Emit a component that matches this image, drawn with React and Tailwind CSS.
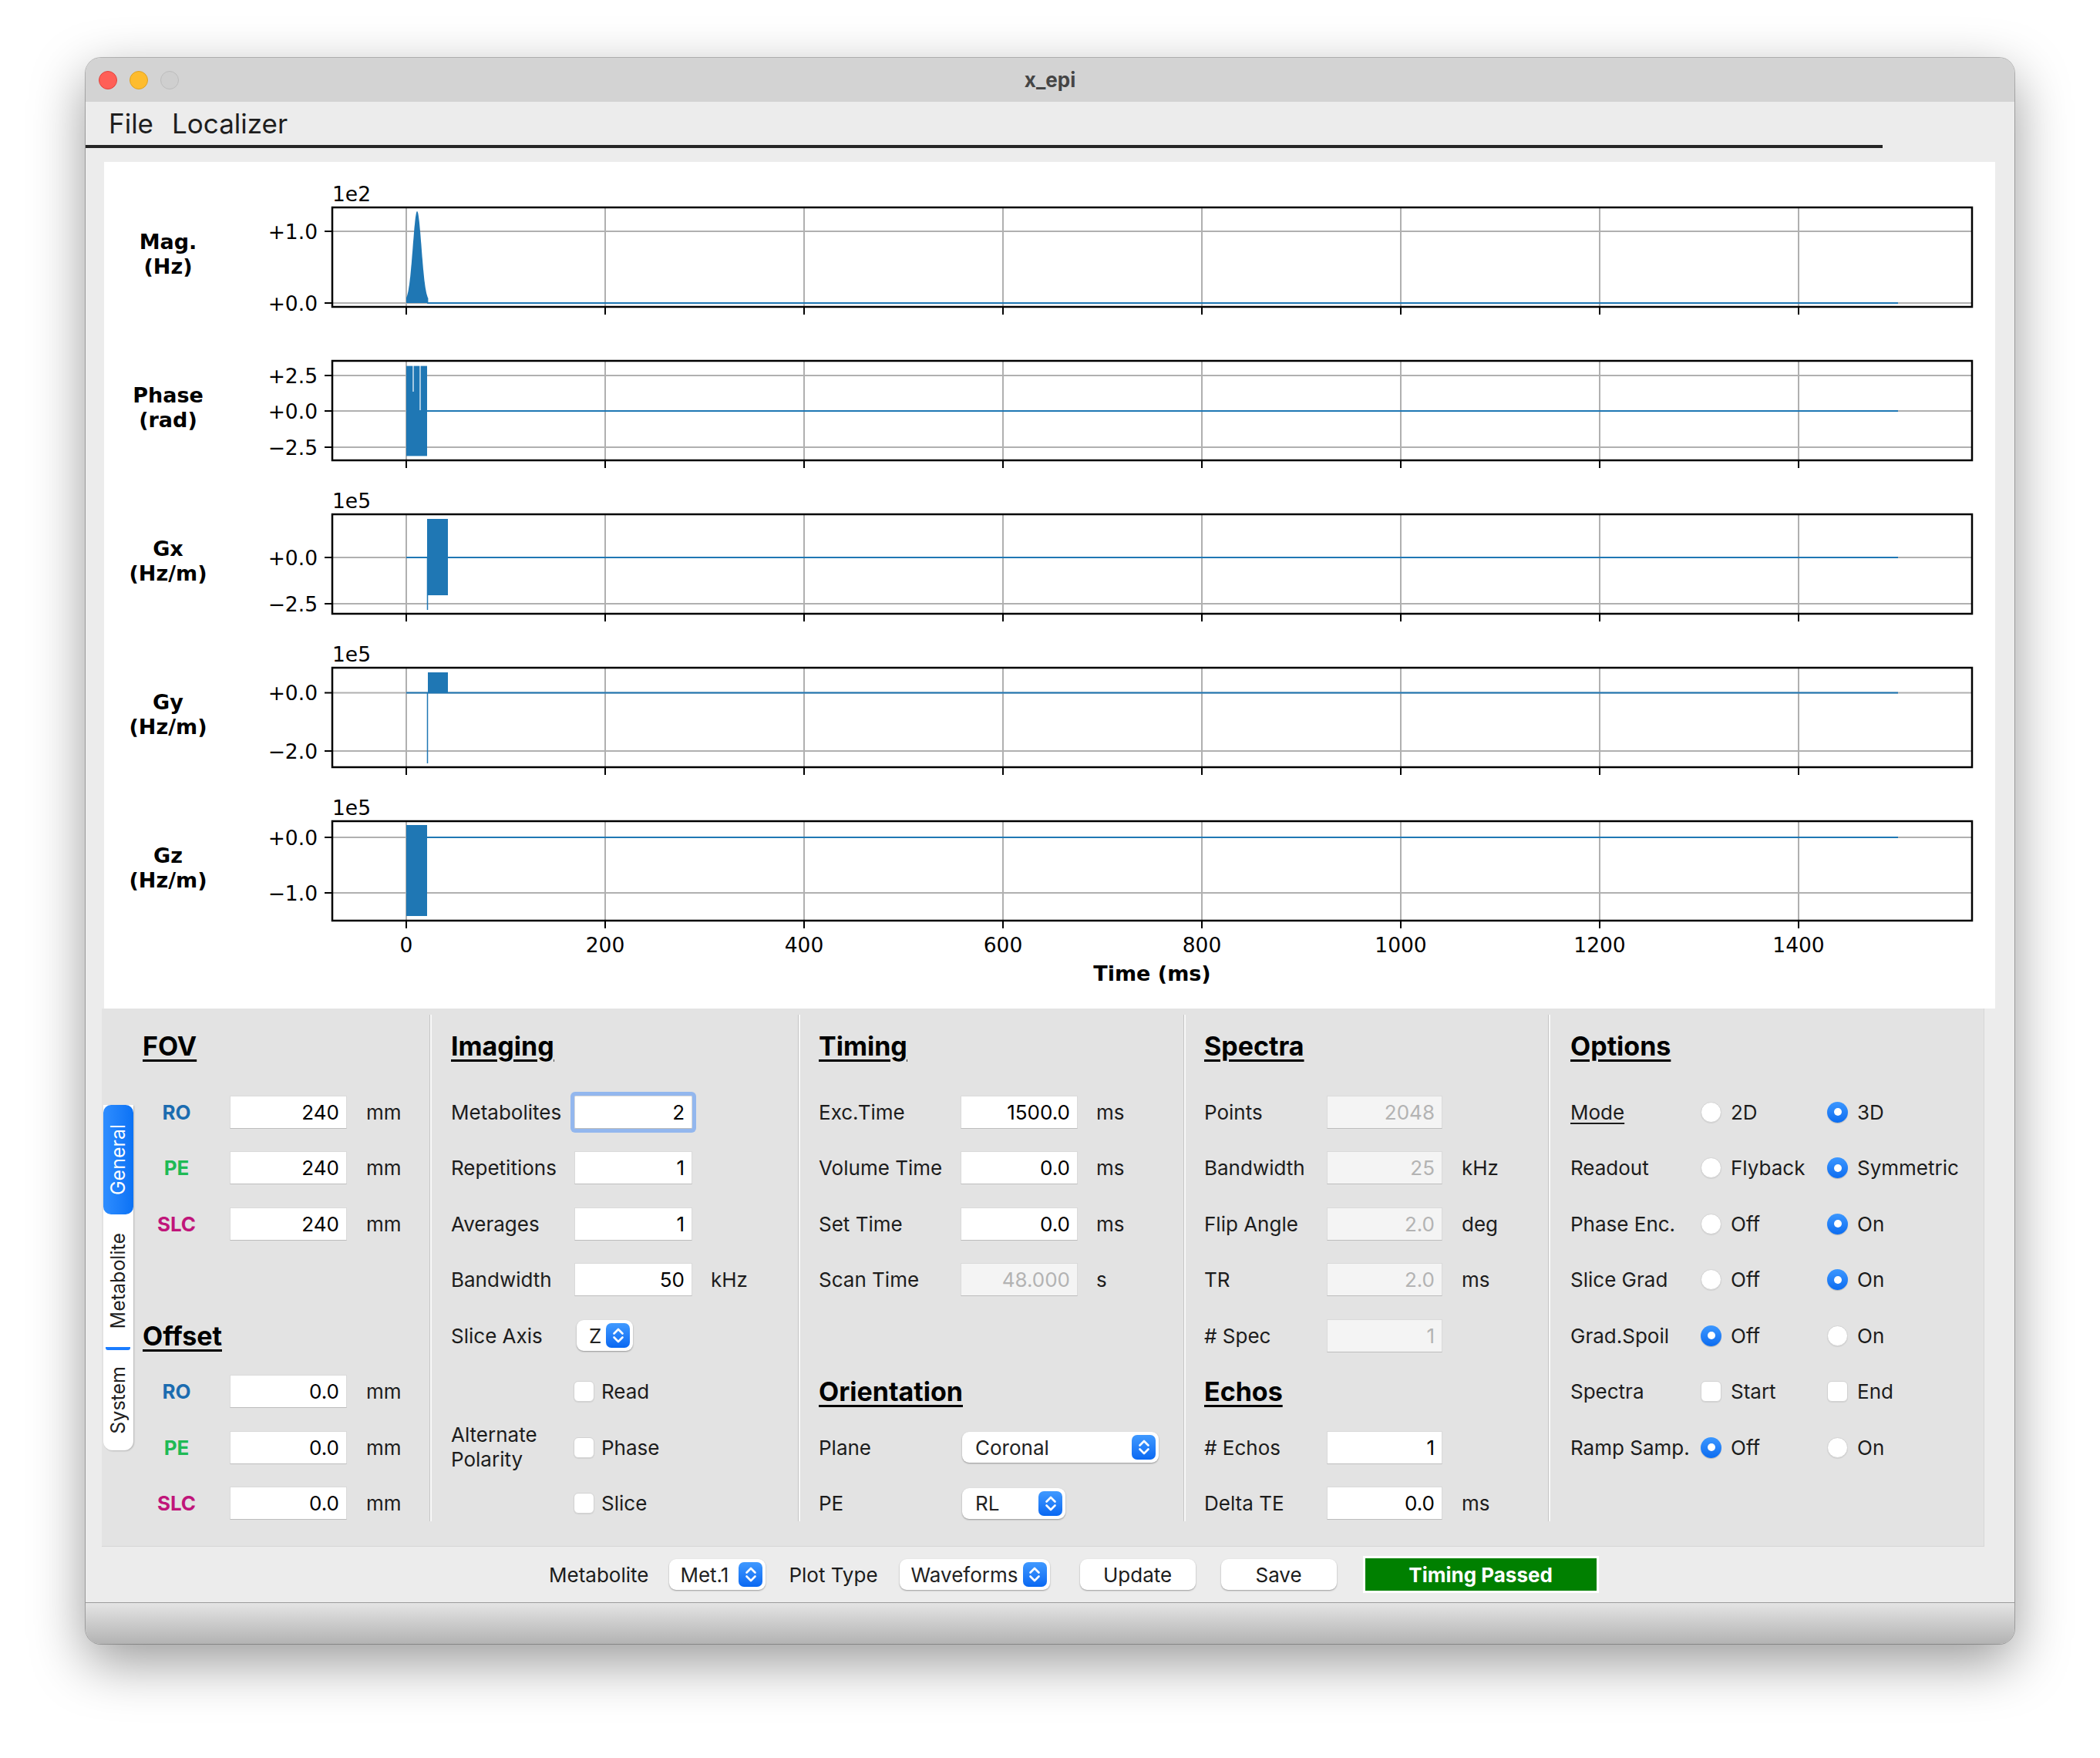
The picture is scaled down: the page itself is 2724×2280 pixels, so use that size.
import React from "react";

// ---- plot geometry (px inside the white figure canvas) ----
const AX_L = 296;
const AX_R = 2423;
const AX_H = 129;
const tx = (t) => 392 + t * 1.29;
const XTICKS = [0, 200, 400, 600, 800, 1000, 1200, 1400];
const END = tx(1500);
const BLUE = "#1f77b4";
const MINUS = "\u2212";

const PLOTS = [
  { key: "mag", top: 59, label: ["Mag.", "(Hz)"], exp: "1e2", ticks: [[90, "+1.0"], [183, "+0.0"]] },
  { key: "phase", top: 258, label: ["Phase", "(rad)"], ticks: [[277, "+2.5"], [323, "+0.0"], [370, MINUS + "2.5"]] },
  { key: "gx", top: 457, label: ["Gx", "(Hz/m)"], exp: "1e5", ticks: [[513, "+0.0"], [573, MINUS + "2.5"]] },
  { key: "gy", top: 656, label: ["Gy", "(Hz/m)"], exp: "1e5", ticks: [[688.5, "+0.0"], [764, MINUS + "2.0"]] },
  { key: "gz", top: 855, label: ["Gz", "(Hz/m)"], exp: "1e5", ticks: [[876, "+0.0"], [948, MINUS + "1.0"]] },
];

// rf magnitude pulse outline (bell shaped)
const magPulse = (() => {
  const pts = [`${tx(0)},183`];
  for (let t = 0; t <= 22; t += 0.25) {
    const v = Math.exp(-((t - 10.9) ** 2) / (2 * 4.3 ** 2));
    pts.push(`${tx(t).toFixed(1)},${(183 - 117 * v - 2).toFixed(1)}`);
  }
  pts.push(`${tx(22)},183`);
  return pts.join(" ");
})();

function Trace({ k }) {
  if (k === "mag")
    return (
      <g>
        <polygon points={magPulse} fill={BLUE} />
        <line x1={tx(21)} y1={183} x2={END} y2={183} stroke={BLUE} strokeWidth="2" />
      </g>
    );
  if (k === "phase")
    return (
      <g>
        <rect x={392} y={264.6} width={27} height={116.8} fill={BLUE} />
        <line x1={401} y1={264} x2={401} y2={298} stroke="white" strokeWidth="1.2" />
        <line x1={410} y1={264} x2={410} y2={322} stroke="white" strokeWidth="1.2" />
        <line x1={419} y1={323} x2={END} y2={323} stroke={BLUE} strokeWidth="2" />
      </g>
    );
  if (k === "gx")
    return (
      <g>
        <line x1={392} y1={513} x2={END} y2={513} stroke={BLUE} strokeWidth="2" />
        <rect x={419} y={463} width={27} height={99} fill={BLUE} />
        <line x1={419.5} y1={513} x2={419.5} y2={581} stroke={BLUE} strokeWidth="1.5" />
      </g>
    );
  if (k === "gy")
    return (
      <g>
        <line x1={392} y1={688.5} x2={END} y2={688.5} stroke={BLUE} strokeWidth="2" />
        <rect x={420} y={662} width={26} height={26.5} fill={BLUE} />
        <line x1={419.5} y1={688.5} x2={419.5} y2={780} stroke={BLUE} strokeWidth="1.5" />
      </g>
    );
  return (
    <g>
      <rect x={392} y={860} width={27} height={118} fill={BLUE} />
      <line x1={419} y1={876} x2={END} y2={876} stroke={BLUE} strokeWidth="2" />
    </g>
  );
}

function Figure() {
  return (
    <svg width="2453" height="1098" viewBox="0 0 2453 1098" fontFamily="'DejaVu Sans', sans-serif">
      {PLOTS.map((p, i) => {
        const bottom = p.top + AX_H;
        const mid = p.top + AX_H / 2;
        const last = i === PLOTS.length - 1;
        return (
          <g key={p.key}>
            {/* grid */}
            {XTICKS.map((t) => (
              <line key={t} x1={tx(t)} y1={p.top} x2={tx(t)} y2={bottom} stroke="#b0b0b0" strokeWidth="2" />
            ))}
            {p.ticks.map(([y]) => (
              <line key={y} x1={AX_L} y1={y} x2={AX_R} y2={y} stroke="#b0b0b0" strokeWidth="2" />
            ))}
            <Trace k={p.key} />
            {/* spines + ticks */}
            <rect x={AX_L} y={p.top} width={AX_R - AX_L} height={AX_H} fill="none" stroke="black" strokeWidth="2.5" />
            {XTICKS.map((t) => (
              <line key={t} x1={tx(t)} y1={bottom} x2={tx(t)} y2={bottom + 10} stroke="black" strokeWidth="2" />
            ))}
            {p.ticks.map(([y, lab]) => (
              <g key={lab}>
                <line x1={AX_L - 10} y1={y} x2={AX_L} y2={y} stroke="black" strokeWidth="2" />
                <text x={277} y={y + 9.6} fontSize="26.5" textAnchor="end">{lab}</text>
              </g>
            ))}
            {p.exp && (
              <text x={AX_L} y={p.top - 8} fontSize="26.5">{p.exp}</text>
            )}
            <text x={83} y={mid - 11} fontSize="27" fontWeight="bold" textAnchor="middle">{p.label[0]}</text>
            <text x={83} y={mid + 21} fontSize="27" fontWeight="bold" textAnchor="middle">{p.label[1]}</text>
            {last &&
              XTICKS.map((t) => (
                <text key={t} x={tx(t)} y={1024.6} fontSize="26.5" textAnchor="middle">{t}</text>
              ))}
          </g>
        );
      })}
      <text x={1359.5} y={1062} fontSize="27" fontWeight="bold" textAnchor="middle">Time (ms)</text>
    </svg>
  );
}

// ---- form widgets ----
const Stepper = () => (
  <span className="w-[31px] h-[32px] shrink-0 rounded-[7px] bg-gradient-to-b from-[#3f99ff] to-[#0868f2] flex items-center justify-center">
    <svg width="16" height="26" viewBox="0 0 16 26" fill="none" stroke="white" strokeWidth="2.6" strokeLinecap="round" strokeLinejoin="round">
      <path d="M2.5 10.5 L8 5 L13.5 10.5" />
      <path d="M2.5 15.5 L8 21 L13.5 15.5" />
    </svg>
  </span>
);

const Combo = ({ value, className }) => (
  <div className={`h-[40px] bg-white rounded-[9px] shadow-[0_1px_2px_rgba(0,0,0,0.35)] flex items-center justify-between pr-[4px] text-[26px] text-[#222] ${className}`}>
    <span>{value}</span>
    <Stepper />
  </div>
);

const Field = ({ value, disabled, focus, w = "w-[152px]" }) => (
  <div
    className={`${w} h-[43px] shrink-0 flex items-center justify-end pr-[9px] text-[26px] border border-[#dadada] border-b-[#bdbdbd] ${
      disabled ? "bg-[#f4f4f4] text-[#b3b3b3]" : "bg-white text-black"
    } ${focus ? "ring-[5px] ring-[#93b7ee] rounded-[2px]" : ""}`}
  >
    {value}
  </div>
);

const Radio = ({ on }) =>
  on ? (
    <span className="w-[27px] h-[27px] shrink-0 rounded-full bg-gradient-to-b from-[#3b97ff] to-[#0a6cf0] shadow-[0_1px_1px_rgba(0,0,0,0.2)] flex items-center justify-center">
      <span className="w-[10px] h-[10px] rounded-full bg-white" />
    </span>
  ) : (
    <span className="w-[27px] h-[27px] shrink-0 rounded-full bg-white border border-[#d2d2d2] shadow-[0_1px_1px_rgba(0,0,0,0.08)]" />
  );

const Check = () => (
  <span className="w-[27px] h-[27px] shrink-0 rounded-[6px] bg-white border border-[#d2d2d2] shadow-[0_1px_1px_rgba(0,0,0,0.08)]" />
);

const Heading = ({ children }) => (
  <span className="text-[34px] font-bold text-black underline decoration-[3px] underline-offset-[5px]">{children}</span>
);

const Row = ({ children }) => <div className="h-[72.5px] flex items-center">{children}</div>;

const Column = ({ title, className, children }) => (
  <div className={`pt-[20px] flex flex-col ${className}`}>
    <div className="h-[56px] flex items-center">
      <Heading>{title}</Heading>
    </div>
    <div className="mt-[22px] flex flex-col">{children}</div>
  </div>
);

const Sep = () => <div className="w-[3px] shrink-0 mt-[8px] mb-[32px] border-l border-[#c6c6c6] bg-[#f8f8f8]" />;

const AxisRow = ({ name, color, value }) => (
  <Row>
    <span className={`w-[88px] text-center font-bold ${color}`}>{name}</span>
    <span className="ml-[25px]">
      <Field value={value} />
    </span>
    <span className="ml-[25px]">mm</span>
  </Row>
);

const LabeledField = ({ label, lw, value, unit, disabled, focus, fw, gap = "ml-[24px]" }) => (
  <Row>
    <span className={`${lw} shrink-0`}>{label}</span>
    <Field value={value} disabled={disabled} focus={focus} w={fw} />
    {unit && <span className={gap}>{unit}</span>}
  </Row>
);

const OptionRow = ({ label, a, b, sel, box, underline }) => (
  <Row>
    <span className={`w-[169px] shrink-0 ${underline ? "underline underline-offset-[4px]" : ""}`}>{label}</span>
    <span className="w-[164px] flex items-center gap-[12px]">
      {box ? <Check /> : <Radio on={sel === 0} />}
      <span>{a}</span>
    </span>
    <span className="flex items-center gap-[12px]">
      {box ? <Check /> : <Radio on={sel === 1} />}
      <span>{b}</span>
    </span>
  </Row>
);

const Tab = ({ children, active, h }) => (
  <div
    className={`${h} flex items-center justify-center text-[25px] ${
      active ? "bg-gradient-to-r from-[#2d8dff] to-[#0a72f5] text-white rounded-[10px]" : "text-[#202020]"
    }`}
  >
    <span className="[writing-mode:vertical-rl] rotate-180">{children}</span>
  </div>
);

function Panel() {
  return (
    <div className="ml-[21px] w-[2442px] h-[698px] shrink-0 bg-[#e3e3e3] border-r border-b border-[#d6d6d6] flex text-[26px] text-[#1c1c1c]">
      {/* vertical tabs */}
      <div className="ml-[2px] mt-[125px] self-start w-[39px] shrink-0 flex flex-col bg-white rounded-b-[12px] shadow-[1px_1px_2px_rgba(0,0,0,0.2)]">
        <Tab active h="h-[142px]">General</Tab>
        <Tab h="h-[172px]">Metabolite</Tab>
        <div className="h-[4px] w-[32px] ml-[3px] rounded-b-[3px] bg-[#1a7cff]" />
        <Tab h="h-[130px]">System</Tab>
      </div>

      <Column title="FOV" className="w-[384px] pl-[12px]">
        <AxisRow name="RO" color="text-[#1b6cb0]" value="240" />
        <AxisRow name="PE" color="text-[#1fba55]" value="240" />
        <AxisRow name="SLC" color="text-[#c0157a]" value="240" />
        <Row />
        <Row>
          <Heading>Offset</Heading>
        </Row>
        <AxisRow name="RO" color="text-[#1b6cb0]" value="0.0" />
        <AxisRow name="PE" color="text-[#1fba55]" value="0.0" />
        <AxisRow name="SLC" color="text-[#c0157a]" value="0.0" />
      </Column>
      <Sep />

      <Column title="Imaging" className="w-[475px] pl-[25px]">
        <LabeledField label="Metabolites" lw="w-[160px]" value="2" fw="w-[153px]" focus />
        <LabeledField label="Repetitions" lw="w-[160px]" value="1" fw="w-[153px]" />
        <LabeledField label="Averages" lw="w-[160px]" value="1" fw="w-[153px]" />
        <LabeledField label="Bandwidth" lw="w-[160px]" value="50" fw="w-[153px]" unit="kHz" />
        <Row>
          <span className="w-[163px] shrink-0">Slice Axis</span>
          <Combo value="Z" className="w-[73px] pl-[16px]" />
        </Row>
        <Row>
          <span className="w-[159px] shrink-0" />
          <span className="flex items-center gap-[9px]">
            <Check />
            <span>Read</span>
          </span>
        </Row>
        <Row>
          <span className="w-[159px] shrink-0 leading-[32px]">
            Alternate
            <br />
            Polarity
          </span>
          <span className="flex items-center gap-[9px]">
            <Check />
            <span>Phase</span>
          </span>
        </Row>
        <Row>
          <span className="w-[159px] shrink-0" />
          <span className="flex items-center gap-[9px]">
            <Check />
            <span>Slice</span>
          </span>
        </Row>
      </Column>
      <Sep />

      <Column title="Timing" className="w-[497px] pl-[24px]">
        <LabeledField label="Exc.Time" lw="w-[184px]" value="1500.0" unit="ms" />
        <LabeledField label="Volume Time" lw="w-[184px]" value="0.0" unit="ms" />
        <LabeledField label="Set Time" lw="w-[184px]" value="0.0" unit="ms" />
        <LabeledField label="Scan Time" lw="w-[184px]" value="48.000" unit="s" disabled />
        <Row />
        <Row>
          <Heading>Orientation</Heading>
        </Row>
        <Row>
          <span className="w-[186px] shrink-0">Plane</span>
          <Combo value="Coronal" className="w-[255px] pl-[17px]" />
        </Row>
        <Row>
          <span className="w-[186px] shrink-0">PE</span>
          <Combo value="RL" className="w-[134px] pl-[17px]" />
        </Row>
      </Column>
      <Sep />

      <Column title="Spectra" className="w-[470px] pl-[24px]">
        <LabeledField label="Points" lw="w-[159px]" value="2048" fw="w-[150px]" disabled />
        <LabeledField label="Bandwidth" lw="w-[159px]" value="25" fw="w-[150px]" unit="kHz" gap="ml-[25px]" disabled />
        <LabeledField label="Flip Angle" lw="w-[159px]" value="2.0" fw="w-[150px]" unit="deg" gap="ml-[25px]" disabled />
        <LabeledField label="TR" lw="w-[159px]" value="2.0" fw="w-[150px]" unit="ms" gap="ml-[25px]" disabled />
        <LabeledField label="# Spec" lw="w-[159px]" value="1" fw="w-[150px]" disabled />
        <Row>
          <Heading>Echos</Heading>
        </Row>
        <LabeledField label="# Echos" lw="w-[159px]" value="1" fw="w-[150px]" />
        <LabeledField label="Delta TE" lw="w-[159px]" value="0.0" fw="w-[150px]" unit="ms" gap="ml-[25px]" />
      </Column>
      <Sep />

      <Column title="Options" className="flex-1 pl-[26px]">
        <OptionRow label="Mode" a="2D" b="3D" sel={1} underline />
        <OptionRow label="Readout" a="Flyback" b="Symmetric" sel={1} />
        <OptionRow label="Phase Enc." a="Off" b="On" sel={1} />
        <OptionRow label="Slice Grad" a="Off" b="On" sel={1} />
        <OptionRow label="Grad.Spoil" a="Off" b="On" sel={0} />
        <OptionRow label="Spectra" a="Start" b="End" box />
        <OptionRow label="Ramp Samp." a="Off" b="On" sel={0} />
      </Column>
    </div>
  );
}

const Button = ({ children, className }) => (
  <div className={`w-[150px] h-[40px] bg-white rounded-[9px] shadow-[0_1px_2px_rgba(0,0,0,0.35)] flex items-center justify-center ${className}`}>
    {children}
  </div>
);

export default function App() {
  return (
    <div className="w-[2724px] h-[2280px] bg-white pl-[111px] pt-[75px] [font-family:Inter,'Noto_Sans',sans-serif]">
      <div className="w-[2502px] h-[2057px] rounded-[20px] overflow-hidden bg-[#ececec] ring-1 ring-black/25 shadow-[0_24px_70px_rgba(0,0,0,0.4)] flex flex-col">
        {/* title bar */}
        <div className="h-[57px] shrink-0 bg-[#d3d3d3] grid grid-cols-[1fr_auto_1fr] items-center">
          <div className="flex gap-[16px] pl-[17px]">
            <span className="w-[24px] h-[24px] rounded-full bg-[#ff5f57] border border-[#e0443e]" />
            <span className="w-[24px] h-[24px] rounded-full bg-[#febc2e] border border-[#dea123]" />
            <span className="w-[24px] h-[24px] rounded-full bg-[#cfcfcf] border border-[#bcbcbc]" />
          </div>
          <span className="text-[26px] font-bold text-[#454545]">x_epi</span>
          <span />
        </div>

        {/* menu */}
        <div className="h-[56px] shrink-0 flex items-center pl-[30px] gap-[24px] text-[35px] text-[#1e1e1e]">
          <span>File</span>
          <span>Localizer</span>
        </div>
        <div className="h-[4px] w-[2331px] shrink-0 bg-[#262626]" />

        {/* figure */}
        <div className="mt-[18px] ml-[24px] w-[2453px] h-[1098px] shrink-0 bg-white">
          <Figure />
        </div>

        <Panel />

        {/* bottom controls */}
        <div className="h-[72px] shrink-0 flex items-center pl-[601px] text-[26px] text-[#1c1c1c]">
          <span>Metabolite</span>
          <Combo value="Met.1" className="ml-[27px] w-[125px] pl-[14px]" />
          <span className="ml-[30px]">Plot Type</span>
          <Combo value="Waveforms" className="ml-[28px] w-[195px] pl-[15px]" />
          <Button className="ml-[39px]">Update</Button>
          <Button className="ml-[33px]">Save</Button>
          <div className="ml-[34px] w-[306px] h-[48px] bg-[#008000] border-[3px] border-white flex items-center justify-center text-white font-bold">
            Timing Passed
          </div>
        </div>

        {/* status bar */}
        <div className="flex-1 border-t border-[#9a9a9a] bg-gradient-to-b from-[#e4e4e4] to-[#b3b3b3]" />
      </div>
    </div>
  );
}
